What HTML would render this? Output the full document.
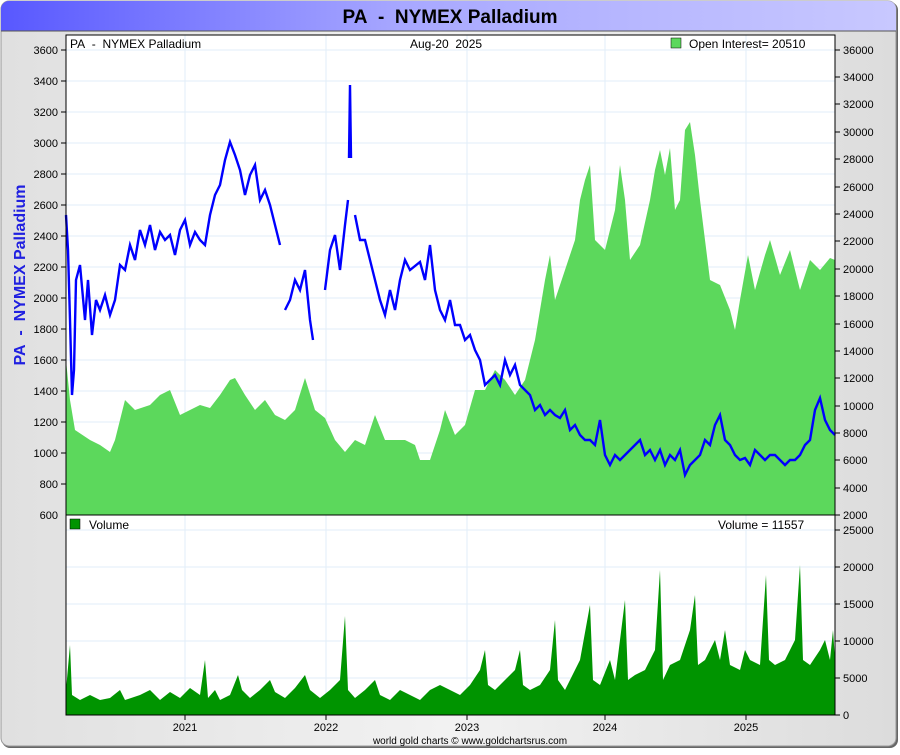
<!DOCTYPE html>
<html><head><style>
body{margin:0;background:#fff;width:900px;height:750px;overflow:hidden;font-family:"Liberation Sans",sans-serif}
</style></head><body>
<svg width="900" height="750" xmlns="http://www.w3.org/2000/svg" font-family="Liberation Sans, sans-serif" xml:space="preserve">
<defs>
<linearGradient id="hd" x1="0" x2="1"><stop offset="0" stop-color="#5858ff"/><stop offset="0.45" stop-color="#a8a8ff"/><stop offset="1" stop-color="#c8c8ff"/></linearGradient>
<linearGradient id="bg" x1="0" x2="1"><stop offset="0" stop-color="#e0e0e0"/><stop offset="0.5" stop-color="#f2f2f2"/><stop offset="1" stop-color="#dcdcdc"/></linearGradient>
</defs>
<rect x="2" y="2" width="896" height="746" rx="8" fill="#666"/>
<rect x="1" y="1" width="895" height="745" rx="8" fill="url(#bg)" stroke="#999"/>
<path d="M1 31 V9 a8 8 0 0 1 8 -8 H888 a8 8 0 0 1 8 8 V31 Z" fill="url(#hd)"/>
<line x1="1" y1="31" x2="896" y2="31" stroke="#555"/>
<text x="450" y="23" text-anchor="middle" font-size="19" font-weight="bold">PA&#160;&#160;-&#160;&#160;NYMEX Palladium</text>
<rect x="66" y="35" width="769" height="680" fill="#fff"/>
<g stroke="#e2eef8" stroke-width="1">
<line x1="185" y1="35" x2="185" y2="715"/><line x1="326" y1="35" x2="326" y2="715"/><line x1="467" y1="35" x2="467" y2="715"/><line x1="605" y1="35" x2="605" y2="715"/><line x1="746" y1="35" x2="746" y2="715"/>
<line x1="66" y1="50" x2="835" y2="50"/><line x1="66" y1="81" x2="835" y2="81"/><line x1="66" y1="112" x2="835" y2="112"/><line x1="66" y1="143" x2="835" y2="143"/><line x1="66" y1="174" x2="835" y2="174"/><line x1="66" y1="205" x2="835" y2="205"/><line x1="66" y1="236" x2="835" y2="236"/><line x1="66" y1="267" x2="835" y2="267"/><line x1="66" y1="298" x2="835" y2="298"/><line x1="66" y1="329" x2="835" y2="329"/><line x1="66" y1="360" x2="835" y2="360"/><line x1="66" y1="391" x2="835" y2="391"/><line x1="66" y1="422" x2="835" y2="422"/><line x1="66" y1="453" x2="835" y2="453"/><line x1="66" y1="484" x2="835" y2="484"/>
<line x1="66" y1="530" x2="835" y2="530"/><line x1="66" y1="567" x2="835" y2="567"/><line x1="66" y1="604" x2="835" y2="604"/><line x1="66" y1="641" x2="835" y2="641"/><line x1="66" y1="678" x2="835" y2="678"/>
</g>
<polygon fill="#5cd85c" points="66,360 70,400 75,430 90,440 100,445 110,452 115,440 125,400 135,410 150,405 160,395 170,390 180,415 190,410 200,405 210,408 220,395 230,380 235,378 245,395 255,410 265,400 275,415 285,420 295,410 305,378 315,410 325,418 335,440 345,452 355,440 365,445 375,415 385,440 395,440 405,440 415,445 420,460 430,460 440,430 445,410 455,435 465,425 475,390 485,390 495,370 505,380 515,395 525,380 535,340 545,280 550,255 555,300 565,270 575,240 580,200 585,180 590,165 595,240 605,250 615,210 620,165 625,200 630,260 640,245 650,200 655,170 660,150 665,175 670,148 675,210 680,200 685,130 690,122 695,155 700,200 710,280 720,285 730,310 735,330 740,300 748,255 755,290 765,255 770,240 780,275 790,250 800,290 810,260 820,270 830,258 835,260 835,515 66,515"/>
<g fill="none" stroke="#0000ff" stroke-width="2.4">
<polyline points="66,215 68,250 70,320 72,395 74,370 76,280 80,265 85,320 88,280 92,335 96,300 100,310 105,295 110,315 115,300 120,265 125,270 130,245 135,260 140,230 145,245 150,225 155,250 160,232 165,240 170,235 175,255 180,230 185,220 190,245 195,232 200,240 205,245 210,215 215,195 220,185 225,160 230,142 235,155 240,170 245,195 250,175 255,165 260,200 265,190 270,205 275,225 280,245"/>
<polyline points="285,310 290,300 295,280 300,290 305,270 310,320 313,340"/>
<polyline points="325,290 330,250 335,235 340,270 345,225 348,200"/>
<polyline points="349,158 350,85 351,158"/>
<polyline points="355,215 360,240 365,240 370,260 375,280 380,300 385,315 390,290 395,310 400,280 405,260 410,270 420,262 425,280 430,245 435,290 440,310 445,320 450,300 455,325 460,325 465,340 470,335 475,350 480,360 485,385 490,380 495,375 500,385 505,360 510,375 515,365 520,385 525,390 530,395 535,410 540,405 545,415 550,410 555,415 560,418 565,410 570,430 575,425 580,435 585,440 590,440 595,445 600,420 605,455 610,465 615,455 620,460 625,455 630,450 635,445 640,440 645,455 650,450 655,460 660,450 665,465 670,455 675,460 680,450 685,475 690,465 695,460 700,455 705,440 710,445 715,425 720,415 725,440 730,445 735,455 740,460 745,458 750,465 755,450 760,455 765,460 770,455 775,455 780,460 785,465 790,460 795,460 800,455 805,445 810,440 815,410 820,398 825,420 830,430 835,435"/>
</g>
<g fill="#009400">
<rect x="66" y="700" width="404" height="15"/><rect x="470" y="692" width="130" height="23"/><rect x="600" y="687" width="235" height="28"/>
<polygon points="66,715 66,690 70,645 72,695 80,700 90,695 100,700 110,698 120,690 125,700 140,695 150,690 160,700 170,692 180,698 190,688 200,695 205,660 208,698 215,690 220,700 230,695 238,675 242,690 250,698 260,690 270,680 275,692 285,698 295,688 305,675 310,690 320,698 330,690 340,680 345,616 348,690 355,698 365,690 375,680 380,695 390,700 400,690 410,695 420,700 430,690 440,685 450,690 460,695 470,685 480,670 485,650 488,685 495,690 505,680 515,670 520,650 523,685 530,690 540,685 550,670 555,620 558,680 565,690 575,670 580,660 590,605 593,680 600,685 610,660 615,680 625,600 628,680 635,675 645,670 655,650 660,570 663,680 670,665 680,660 690,630 695,595 698,665 705,660 715,640 720,660 725,630 730,665 740,670 745,650 750,660 760,665 766,575 769,660 775,665 785,660 795,640 800,565 803,660 810,665 820,650 825,640 830,660 833,630 835,660 835,715"/>
</g>
<rect x="66" y="35" width="769" height="680" fill="none" stroke="#000"/>
<line x1="66" y1="515" x2="835" y2="515" stroke="#000"/>
<g font-size="12">
<text x="70" y="48">PA&#160;&#160;-&#160;&#160;NYMEX Palladium</text>
<text x="410" y="48">Aug-20&#160;&#160;2025</text>
<rect x="671" y="38" width="10" height="10" fill="#5cd85c" stroke="#000" stroke-width="0.5"/>
<text x="689" y="48">Open Interest= 20510</text>
<rect x="70" y="519" width="10" height="10" fill="#009400" stroke="#000" stroke-width="0.5"/>
<text x="89" y="529">Volume</text>
<text x="718" y="529">Volume = 11557</text>
</g>
<g font-size="11" text-anchor="end">
<text x="58" y="54">3600</text><text x="58" y="85">3400</text><text x="58" y="116">3200</text><text x="58" y="147">3000</text><text x="58" y="178">2800</text><text x="58" y="209">2600</text><text x="58" y="240">2400</text><text x="58" y="271">2200</text><text x="58" y="302">2000</text><text x="58" y="333">1800</text><text x="58" y="364">1600</text><text x="58" y="395">1400</text><text x="58" y="426">1200</text><text x="58" y="457">1000</text><text x="58" y="488">800</text><text x="58" y="519">600</text>
</g>
<g stroke="#000"><line x1="61" y1="50" x2="66" y2="50"/><line x1="61" y1="81" x2="66" y2="81"/><line x1="61" y1="112" x2="66" y2="112"/><line x1="61" y1="143" x2="66" y2="143"/><line x1="61" y1="174" x2="66" y2="174"/><line x1="61" y1="205" x2="66" y2="205"/><line x1="61" y1="236" x2="66" y2="236"/><line x1="61" y1="267" x2="66" y2="267"/><line x1="61" y1="298" x2="66" y2="298"/><line x1="61" y1="329" x2="66" y2="329"/><line x1="61" y1="360" x2="66" y2="360"/><line x1="61" y1="391" x2="66" y2="391"/><line x1="61" y1="422" x2="66" y2="422"/><line x1="61" y1="453" x2="66" y2="453"/><line x1="61" y1="484" x2="66" y2="484"/>
<line x1="835" y1="50" x2="840" y2="50"/><line x1="835" y1="77" x2="840" y2="77"/><line x1="835" y1="104" x2="840" y2="104"/><line x1="835" y1="132" x2="840" y2="132"/><line x1="835" y1="159" x2="840" y2="159"/><line x1="835" y1="187" x2="840" y2="187"/><line x1="835" y1="214" x2="840" y2="214"/><line x1="835" y1="241" x2="840" y2="241"/><line x1="835" y1="269" x2="840" y2="269"/><line x1="835" y1="296" x2="840" y2="296"/><line x1="835" y1="324" x2="840" y2="324"/><line x1="835" y1="351" x2="840" y2="351"/><line x1="835" y1="378" x2="840" y2="378"/><line x1="835" y1="406" x2="840" y2="406"/><line x1="835" y1="433" x2="840" y2="433"/><line x1="835" y1="460" x2="840" y2="460"/><line x1="835" y1="488" x2="840" y2="488"/><line x1="835" y1="515" x2="840" y2="515"/>
<line x1="835" y1="530" x2="840" y2="530"/><line x1="835" y1="567" x2="840" y2="567"/><line x1="835" y1="604" x2="840" y2="604"/><line x1="835" y1="641" x2="840" y2="641"/><line x1="835" y1="678" x2="840" y2="678"/><line x1="835" y1="715" x2="840" y2="715"/>
<line x1="185" y1="715" x2="185" y2="720"/><line x1="326" y1="715" x2="326" y2="720"/><line x1="467" y1="715" x2="467" y2="720"/><line x1="605" y1="715" x2="605" y2="720"/><line x1="746" y1="715" x2="746" y2="720"/></g>
<g font-size="11">
<text x="843" y="54">36000</text><text x="843" y="81">34000</text><text x="843" y="108">32000</text><text x="843" y="136">30000</text><text x="843" y="163">28000</text><text x="843" y="191">26000</text><text x="843" y="218">24000</text><text x="843" y="245">22000</text><text x="843" y="273">20000</text><text x="843" y="300">18000</text><text x="843" y="328">16000</text><text x="843" y="355">14000</text><text x="843" y="382">12000</text><text x="843" y="410">10000</text><text x="843" y="437">8000</text><text x="843" y="464">6000</text><text x="843" y="492">4000</text><text x="843" y="519">2000</text>
<text x="843" y="534">25000</text><text x="843" y="571">20000</text><text x="843" y="608">15000</text><text x="843" y="645">10000</text><text x="843" y="682">5000</text><text x="843" y="719">0</text>
</g>
<g font-size="11" text-anchor="middle">
<text x="185" y="731">2021</text><text x="326" y="731">2022</text><text x="467" y="731">2023</text><text x="605" y="731">2024</text><text x="746" y="731">2025</text>
<text x="470" y="744" font-size="10">world gold charts © www.goldchartsrus.com</text>
</g>
<text transform="translate(25,275) rotate(-90)" text-anchor="middle" font-size="16" font-weight="bold" fill="#2020e0">PA&#160;&#160;-&#160;&#160;NYMEX Palladium</text>
</svg>
</body></html>
